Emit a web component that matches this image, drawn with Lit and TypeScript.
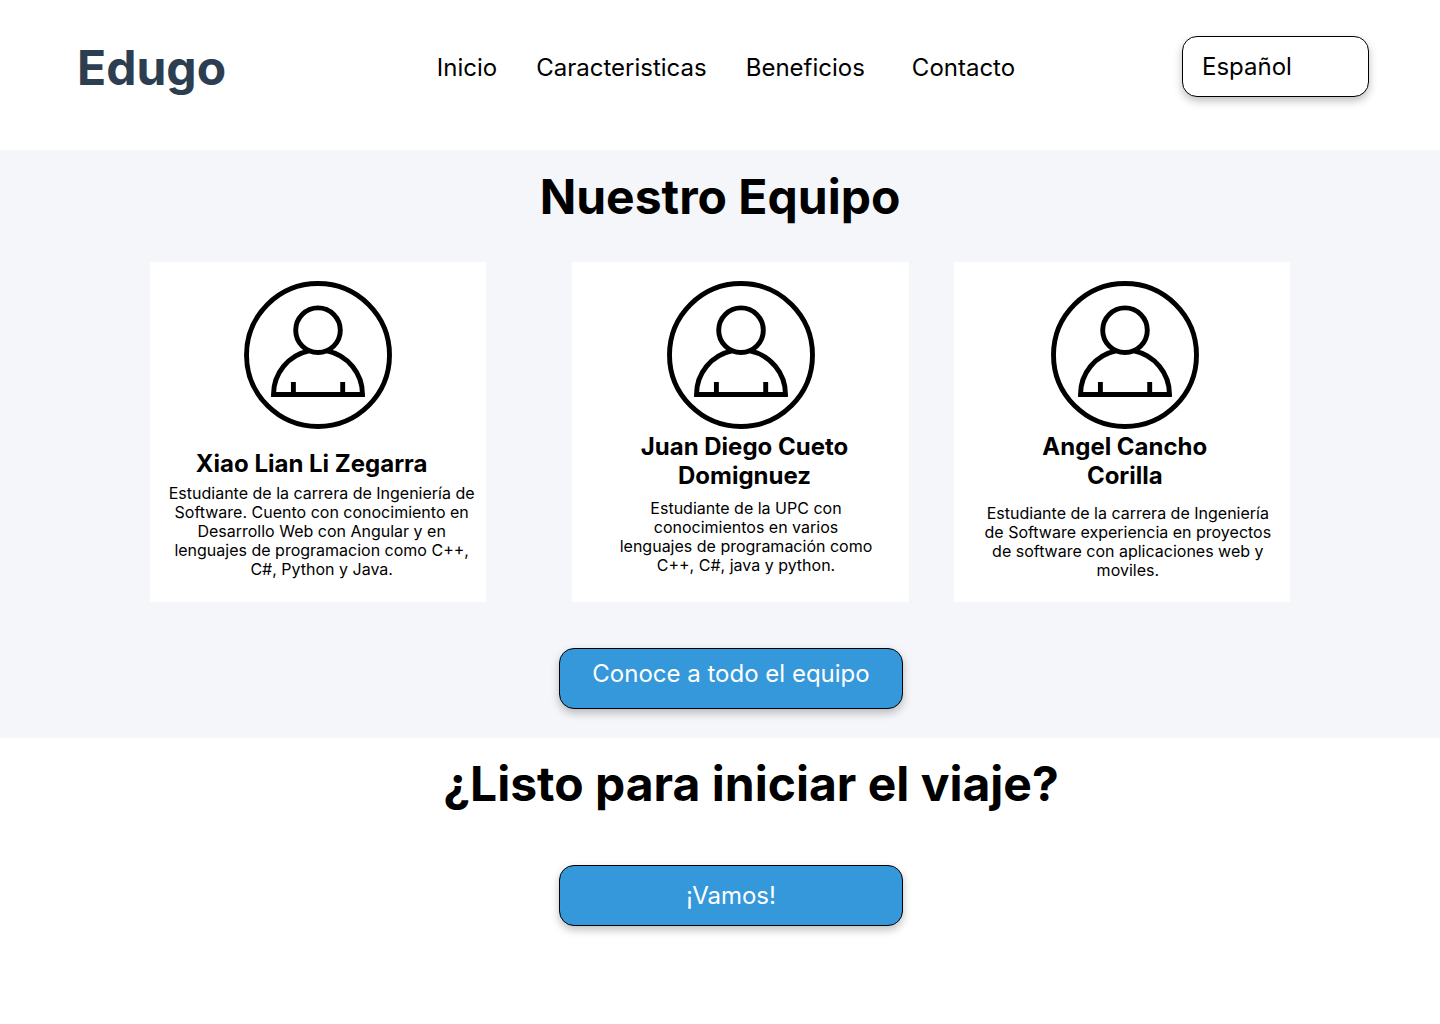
import { LitElement, html, css, svg } from "lit";
import { customElement } from "lit/decorators.js";

interface Member { name: string[]; bio: string[]; variant: string; }

const members: Member[] = [
  { name: ["Xiao Lian Li Zegarra"], bio: ["Estudiante de la carrera de Ingeniería de", "Software. Cuento con conocimiento en", "Desarrollo Web con Angular y en", "lenguajes de programacion como C++,", "C#, Python y Java."], variant: "first" },
  { name: ["Juan Diego Cueto", "Domignuez"], bio: ["Estudiante de la UPC con", "conocimientos en varios", "lenguajes de programación como", "C++, C#, java y python."], variant: "second" },
  { name: ["Angel Cancho", "Corilla"], bio: ["Estudiante de la carrera de Ingeniería", "de Software experiencia en proyectos", "de software con aplicaciones web y", "moviles."], variant: "third" },
];

const lines = (parts: string[]) => parts.map((p, i) => (i ? html`<br />${p}` : p));

const avatar = html`<svg class="avatar" viewBox="0 0 148 148" aria-hidden="true">
  ${svg`<g fill="none" stroke="#000" stroke-width="4.9">
    <circle cx="74" cy="74" r="71.5" />
    <circle cx="74" cy="49.2" r="22.3" />
    <path d="M65 69.900A44.500 44.500 0 0 0 29.500 113.500H118.500A44.500 44.500 0 0 0 83 69.900M49.400 101V113M98.700 101V113" />
  </g>`}
</svg>`;

@customElement("app-root")
export class AppRoot extends LitElement {
  static styles = css`
    :host { display: block; min-height: 100vh; background: #fff; color: #000; font-family: Inter, "Liberation Sans", sans-serif; }
    * { box-sizing: border-box; }
    h1, h2, h3, p { margin: 0; }
    .header { display: grid; grid-template-columns: 1fr auto 1fr; align-items: start; min-height: 150px; padding: 36px 71px 0 77px; }
    .brand { color: #2c3e50; font-size: 48px; line-height: 58px; font-weight: 700; text-decoration: none; margin-top: 3px; }
    .nav { display: flex; margin-top: 17px; padding-left: 6px; gap: 39px; }
    .nav a { color: inherit; text-decoration: none; font-size: 24px; line-height: 29px; }
    .nav a:last-child { margin-left: 8px; }
    .language { justify-self: end; width: 187px; height: 61px; padding: 0 19px; appearance: none; border: 1px solid #000; border-radius: 15px; background: #fff; color: #000; font: 400 24px/29px Inter, sans-serif; box-shadow: 0 4px 8px rgba(0, 0, 0, 0.25); }
    .team { background: #f4f6fa; padding: 18px 150px 29px; display: flex; flex-direction: column; align-items: center; }
    h2 { font-size: 48px; line-height: 58px; font-weight: 700; text-align: center; }
    .cards { width: 100%; display: grid; grid-template-columns: 1fr 86px 1fr 45px 1fr; margin-top: 36px; }
    .card { min-height: 340px; background: #fff; padding-top: 19px; display: flex; flex-direction: column; align-items: center; text-align: center; }
    .card.first { grid-column: 1; }
    .card.second { grid-column: 3; padding-left: 2px; }
    .card.third { grid-column: 5; padding-left: 6px; }
    .avatar { width: 148px; height: 148px; display: block; flex: none; }
    h3 { font-size: 24px; line-height: 29px; font-weight: 700; margin-top: 3px; }
    .bio { font-size: 16px; line-height: 19px; }
    .first h3 { margin-top: 20px; padding-right: 13px; }
    .first .bio { margin-top: 6px; padding-left: 7px; }
    .second h3 { padding-left: 6px; }
    .second .bio { margin-top: 9px; padding-left: 9px; }
    .third .bio { margin-top: 14px; padding-left: 6px; }
    .action { display: block; width: 344px; height: 61px; padding: 0; border: 1px solid #000; border-radius: 15px; background: #3498db; color: #fff; font: 400 24px/29px Inter, sans-serif; box-shadow: 0 4px 8px rgba(0, 0, 0, 0.25); cursor: pointer; }
    .meet { margin: 46px 0 0 22px; padding-bottom: 10px; }
    .start { display: flex; flex-direction: column; align-items: center; padding: 17px 0 40px 22px; }
    .start h2 { padding-left: 40px; }
    .start .action { margin-top: 52px; }
  `;

  render() {
    return html`
      <header class="header">
        <a class="brand" href="#inicio">Edugo</a>
        <nav class="nav" aria-label="Principal">
          <a href="#inicio">Inicio</a><a href="#caracteristicas">Caracteristicas</a><a href="#beneficios">Beneficios</a><a href="#contacto">Contacto</a>
        </nav>
        <select class="language" aria-label="Idioma"><option>Español</option></select>
      </header>
      <main>
        <section class="team">
          <h2>Nuestro Equipo</h2>
          <div class="cards">
            ${members.map((m) => html`<article class="card ${m.variant}">
              ${avatar}
              <h3>${lines(m.name)}</h3>
              <p class="bio">${lines(m.bio)}</p>
            </article>`)}
          </div>
          <button class="action meet" type="button">Conoce a todo el equipo</button>
        </section>
        <section class="start">
          <h2>¿Listo para iniciar el viaje?</h2>
          <button class="action" type="button">¡Vamos!</button>
        </section>
      </main>
    `;
  }
}
